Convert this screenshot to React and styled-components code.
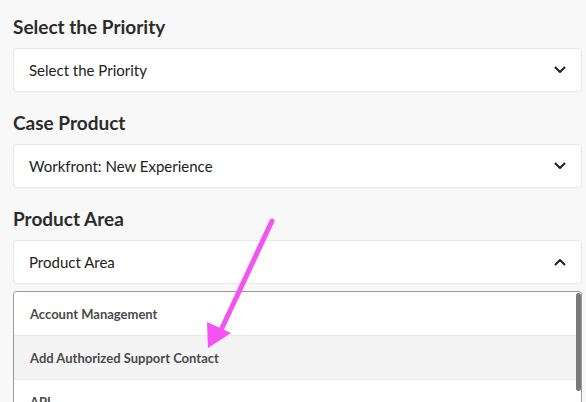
import React from 'react'
import styled, { createGlobalStyle } from 'styled-components'

const GlobalStyle = createGlobalStyle`
html, body {
  margin: 0;
  padding: 0;
  background: #f8f8f8;
  overflow: hidden;
}
body {
  font-family: Lato, "Noto Sans", sans-serif;
}
`

const Page = styled.div`
position: relative;
width: 586px;
height: 402px;
overflow: hidden;
padding: 15px 4px 0 13px;
box-sizing: border-box;
`

const Section = styled.div`
margin-bottom: 19px;
`

const Label = styled.div`
font-size: 19px;
line-height: 24px;
font-weight: 700;
color: #2c2c2c;
margin-bottom: 9px;
`

const SelectBox = styled.div`
height: 44px;
box-sizing: border-box;
background: #ffffff;
border: 1px solid #e6e6e6;
border-radius: 4px;
display: flex;
align-items: center;
justify-content: space-between;
padding: 0 15px 0 15px;
font-size: 15px;
color: #222222;
`

const Menu = styled.div`
position: relative;
margin-top: 7px;
background: #ffffff;
border: 1px solid #9a9a9a;
border-bottom: none;
border-radius: 4px 4px 0 0;
height: 120px;
overflow: hidden;
`

const Option = styled.div`
height: 44px;
box-sizing: border-box;
display: flex;
align-items: center;
padding-left: 16px;
font-size: 13px;
font-weight: 700;
color: #4b4b4b;
background: ${p => (p.$hover ? '#f4f4f4' : '#ffffff')};
border-bottom: 1px solid #e8e8e8;
`

const Thumb = styled.div`
position: absolute;
right: 0;
top: 1px;
width: 5px;
height: 98px;
border-radius: 3px;
background: #7a7a7a;
`

const ArrowLayer = styled.svg`
position: absolute;
left: 0;
top: 0;
pointer-events: none;
`

function Chevron({ up }) {
  return (
    <svg width="12" height="8" viewBox="0 0 12 8">
      <path
        d={up ? 'M1.5 6.5 L6 2 L10.5 6.5' : 'M1.5 1.5 L6 6 L10.5 1.5'}
        fill="none"
        stroke="#222"
        strokeWidth="2"
        strokeLinecap="round"
        strokeLinejoin="round"
      />
    </svg>
  )
}

const options = ['Account Management', 'Add Authorized Support Contact', 'API']

function App() {
  return (
    <Page>
      <GlobalStyle />
      <Section>
        <Label>Select the Priority</Label>
        <SelectBox>
          <span>Select the Priority</span>
          <Chevron />
        </SelectBox>
      </Section>
      <Section>
        <Label>Case Product</Label>
        <SelectBox>
          <span>Workfront: New Experience</span>
          <Chevron />
        </SelectBox>
      </Section>
      <div>
        <Label>Product Area</Label>
        <SelectBox>
          <span>Product Area</span>
          <Chevron up />
        </SelectBox>
        <Menu>
          {options.map((o, i) => (
            <Option key={o} $hover={i === 1}>{o}</Option>
          ))}
          <Thumb />
        </Menu>
      </div>
      <ArrowLayer width="586" height="402">
        <line x1="272" y1="221" x2="222" y2="328" stroke="#f552f3" strokeWidth="5" strokeLinecap="round" />
        <polygon points="208,348 207,322 231,333" fill="#f552f3" />
      </ArrowLayer>
    </Page>
  )
}

export default App
